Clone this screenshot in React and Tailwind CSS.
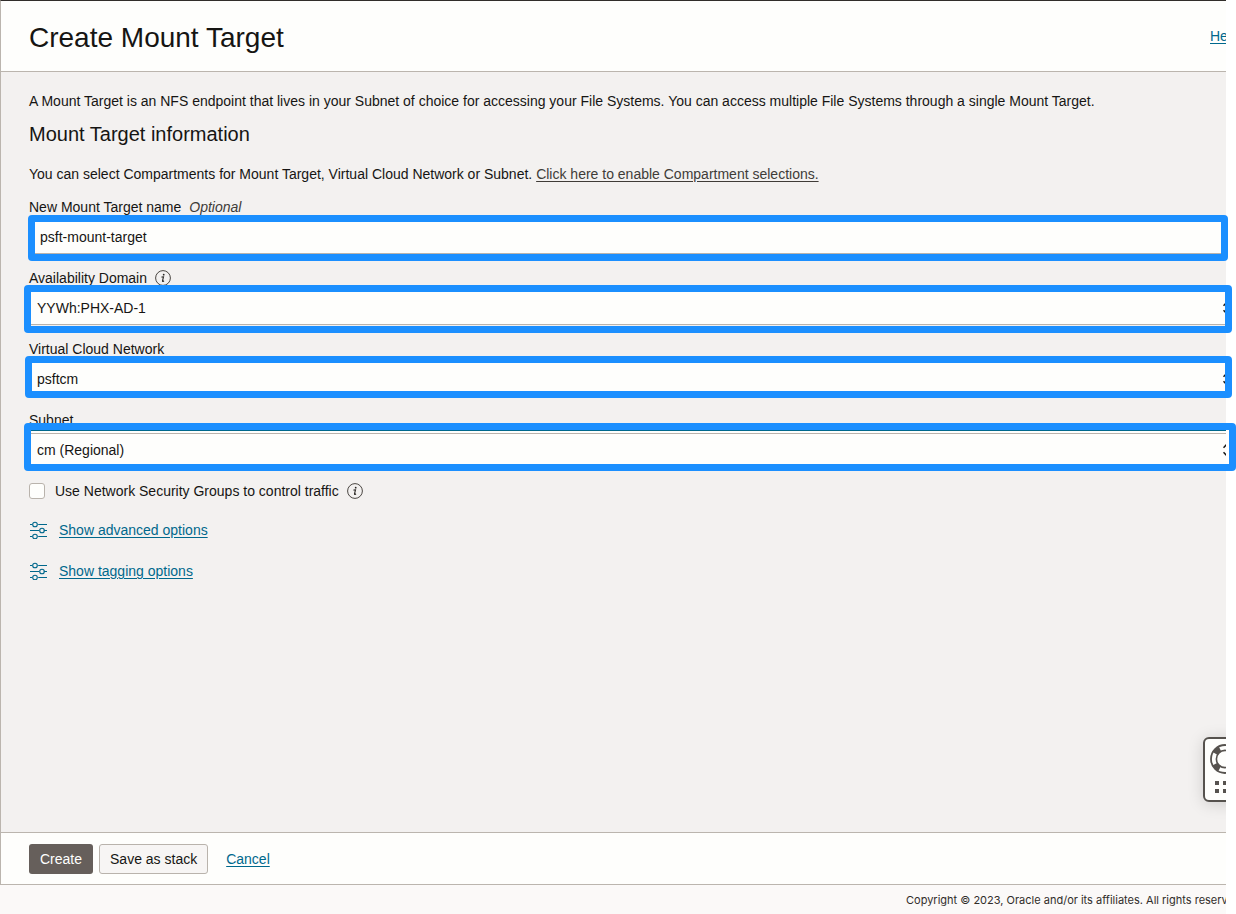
import { useState } from 'react';

function InfoIcon() {
  return (
    <svg className="h-4 w-4 shrink-0" viewBox="0 0 16 16" fill="none" aria-hidden="true">
      <circle cx="8" cy="8" r="7.4" stroke="#4a4642" strokeWidth="1" />
      <circle cx="8.7" cy="4.7" r="0.9" fill="#2b2825" />
      <path d="M6.5 7.1 8.5 6.8 7.5 10.8Q7.4 11.7 8.1 11.4L9 10.7" stroke="#2b2825" strokeWidth="1.1" />
    </svg>
  );
}

function SlidersIcon() {
  return (
    <svg className="h-[18px] w-[18px] shrink-0" viewBox="0 0 18 18" fill="none" stroke="#00688c" strokeWidth="1.1" aria-hidden="true">
      <path d="M1 3.5H3.2M9.2 3.5H18M1 9.5H10M14.8 9.5H18M1 15.5H3.2M9.2 15.5H18" />
      <circle cx="6" cy="3.5" r="2.3" />
      <circle cx="13" cy="9.5" r="2.3" />
      <circle cx="6" cy="15.5" r="2.3" />
    </svg>
  );
}

function LifeBuoy() {
  return (
    <svg className="h-[30px] w-[30px]" viewBox="0 0 30 30" fill="none" stroke="#56524e" aria-hidden="true">
      <circle cx="15" cy="15" r="11.3" strokeWidth="6" strokeDasharray="6.6 11.15" strokeDashoffset="-5.6" />
      <circle cx="15" cy="15" r="14" strokeWidth="1.8" />
      <circle cx="15" cy="15" r="8.6" strokeWidth="1.6" />
    </svg>
  );
}

function Highlight({ className }) {
  return (
    <div
      aria-hidden="true"
      className={`pointer-events-none absolute z-10 rounded-[4px] border-[7px] border-[#1b8fff] ${className}`}
    />
  );
}

function SelectField({ id, label, value, info, frame, focused }) {
  return (
    <div className="flex flex-col gap-[3px]">
      <div className="flex h-5 items-center gap-2">
        <label htmlFor={id}>{label}</label>
        {info && <InfoIcon />}
      </div>
      <div className="relative">
        <div className="relative overflow-hidden">
          <select
            id={id}
            defaultValue={value}
            className="block h-[34px] w-full appearance-none border-y border-[#b9b3ac] bg-[#fefefc] px-2 outline-none"
          >
            <option>{value}</option>
          </select>
          <svg
            className="pointer-events-none absolute top-2.5 -right-[6px] h-3.5 w-[9px]"
            viewBox="0 0 9 14"
            fill="none"
            stroke="#161513"
            strokeWidth="1.5"
            aria-hidden="true"
          >
            <path d="M0.5 4.7 4.5 0.5 8.5 4.7M0.5 9.3 4.5 13.5 8.5 9.3" />
          </svg>
        </div>
        {focused && <div className="absolute inset-x-0 -top-[3px] h-[3px] border-t border-[#00688c] bg-[#fefefc]" />}
        <Highlight className={frame} />
      </div>
    </div>
  );
}

export default function App() {
  const [name, setName] = useState('psft-mount-target');
  return (
    <div className="flex min-h-screen flex-col overflow-x-hidden bg-white pr-2.5 font-['Liberation_Sans',Arial,sans-serif] text-sm leading-5 text-[#161513]">
      <header className="flex h-[72px] items-center justify-between overflow-hidden border-t border-b border-l border-t-[#312d2a] border-b-[#bbb5ae] border-l-[#bbb5ae] bg-[#fefefc] pl-7">
        <h1 className="pt-1 text-[28px] leading-9">Create Mount Target</h1>
        <a href="#help" className="w-4 overflow-hidden text-[#00688c] underline underline-offset-2">Help</a>
      </header>

      <main className="relative flex grow flex-col border-l border-[#bbb5ae] bg-[#f3f1f0] pt-[19px] pl-7">
        <p>
          A Mount Target is an NFS endpoint that lives in your Subnet of choice for accessing your File Systems. You
          can access multiple File Systems through a single Mount Target.
        </p>
        <h2 className="mt-[9px] text-xl leading-7">Mount Target information</h2>
        <p className="mt-4">
          You can select Compartments for Mount Target, Virtual Cloud Network or Subnet.{' '}
          <a href="#compartments" className="text-[#403c38] underline underline-offset-2">
            Click here to enable Compartment selections.
          </a>
        </p>

        <form id="mount-target" className="mt-[13px] flex flex-col gap-3.5" onSubmit={(e) => e.preventDefault()}>
          <div className="flex flex-col gap-[3px]">
            <div className="flex h-5 items-center gap-2">
              <label htmlFor="name">New Mount Target name</label>
              <span className="italic text-[#403c38]">Optional</span>
            </div>
            <div className="relative">
              <input
                id="name"
                value={name}
                onChange={(e) => setName(e.target.value)}
                className="block h-[34px] w-full border-y border-[#b9b3ac] bg-[#fefefc] px-[11px] outline-none"
              />
              <Highlight className="-top-[5px] -right-0.5 -bottom-[7px] -left-px" />
            </div>
          </div>
          <SelectField id="ad" label="Availability Domain" value="YYWh:PHX-AD-1" info frame="-top-[6px] -right-[6px] -bottom-2 -left-[5px]" />
          <SelectField id="vcn" label="Virtual Cloud Network" value="psftcm" frame="-top-[6px] -right-[6px] -bottom-0.5 -left-1" />
          <SelectField id="subnet" label="Subnet" value="cm (Regional)" focused frame="-top-[10px] -right-2.5 -bottom-1 -left-[5px]" />

          <div className="flex items-center gap-2">
            <input
              id="nsg"
              type="checkbox"
              className="h-4 w-4 appearance-none rounded-[3px] border border-[#b9b3ac] bg-[#fefefc] checked:bg-[#00688c]"
            />
            <label htmlFor="nsg" className="pl-0.5">Use Network Security Groups to control traffic</label>
            <InfoIcon />
          </div>
        </form>

        <a href="#advanced" className="mt-[19px] flex items-center gap-3 self-start text-[#00688c] underline underline-offset-2">
          <SlidersIcon />
          Show advanced options
        </a>
        <a href="#tagging" className="mt-[21px] flex items-center gap-3 self-start text-[#00688c] underline underline-offset-2">
          <SlidersIcon />
          Show tagging options
        </a>

        <div className="absolute right-0 bottom-0 h-32 w-14 overflow-hidden">
          <button
            type="button"
            aria-label="Support"
            className="absolute top-[33px] -right-[21px] flex h-[65px] w-11 flex-col items-center gap-[7px] rounded-md border-2 border-[#56524e] bg-[#fefefc] pt-[5px] shadow-[0_2px_16px_rgba(0,0,0,0.15)]"
          >
            <LifeBuoy />
            <svg className="h-3 w-5" viewBox="0 0 20 12" fill="#56524e" aria-hidden="true">
              <path d="M0 0h4v4H0zM8 0h4v4H8zM16 0h4v4h-4zM0 8h4v4H0zM8 8h4v4H8zM16 8h4v4h-4z" />
            </svg>
          </button>
        </div>
      </main>

      <div className="flex h-[53px] items-center border border-r-0 border-[#bbb5ae] bg-[#fefefc] pl-7">
        <button type="submit" form="mount-target" className="h-[30px] rounded-[3px] bg-[#665f5b] px-[11px] text-white">Create</button>
        <button type="button" className="ml-1.5 h-[30px] rounded-[3px] border border-[#b9b3ac] bg-[#f7f5f4] px-2.5">
          Save as stack
        </button>
        <a href="#cancel" className="ml-[18px] text-[#00688c] underline underline-offset-2">Cancel</a>
      </div>

      <footer className="flex h-[29px] items-center justify-end overflow-hidden bg-[#fbf9f8]">
        <p className="w-80 overflow-hidden font-[Inter,sans-serif] text-[11px] whitespace-nowrap text-[#312d2a]">
          Copyright © 2023, Oracle and/or its affiliates. All rights reserved.
        </p>
      </footer>
    </div>
  );
}
